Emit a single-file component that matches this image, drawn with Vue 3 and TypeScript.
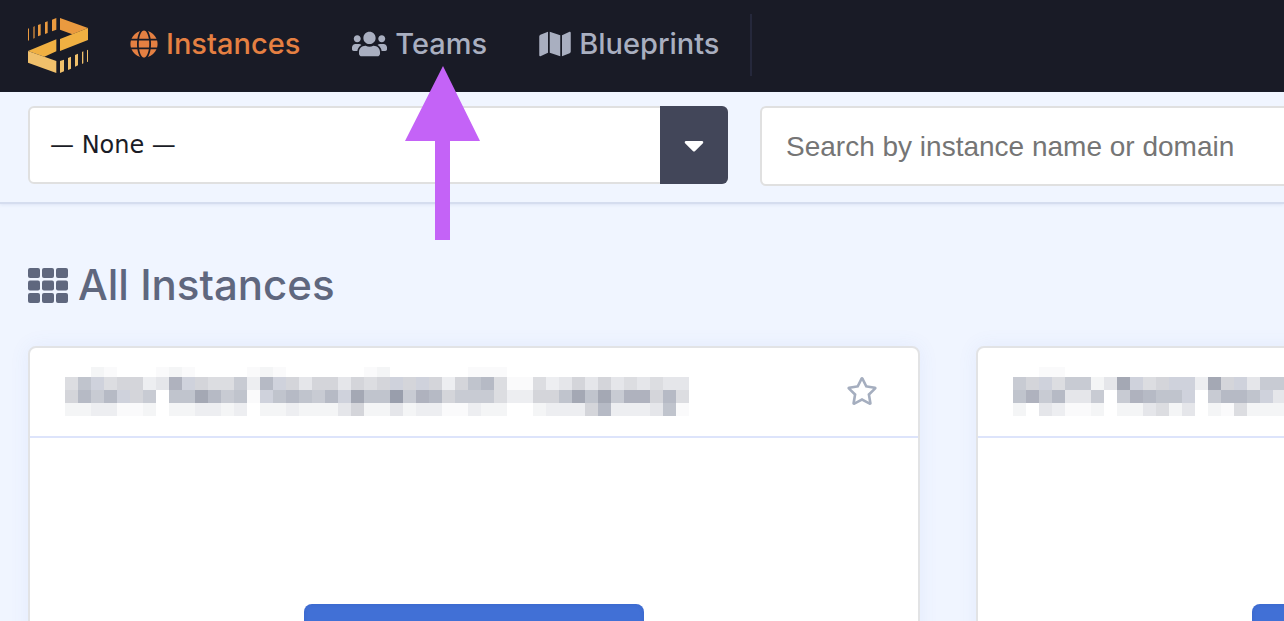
<script setup lang="ts">
import { ref } from 'vue'

interface NavItem {
  label: string
  viewBox: string
  width: number
  path: string
  active: boolean
}

interface Cell {
  x: number
  y: number
  height: number
  fill: string
}

interface Card {
  width: number
  cells: Cell[]
}

const navItems: NavItem[] = [
  {
    label: 'Instances',
    viewBox: '0 0 496 512',
    width: 28,
    active: true,
    path: 'M336.5 160C322 70.7 287.8 8 248 8s-74 62.7-88.5 152h177zM152 256c0 22.2 1.2 43.5 3.3 64h185.3c2.1-20.5 3.3-41.8 3.3-64s-1.2-43.5-3.3-64H155.3c-2.1 20.5-3.3 41.8-3.3 64zm324.7-96c-28.6-67.9-86.5-120.4-158-141.6 24.4 33.8 41.2 84.7 50 141.6h108zM177.2 18.4C105.8 39.6 47.8 92.1 19.3 160h108c8.7-56.9 25.5-107.8 49.9-141.6zM487.4 192H372.7c2.1 21 3.3 42.5 3.3 64s-1.2 43-3.3 64h114.6c5.5-20.5 8.6-41.8 8.6-64s-3.1-43.5-8.5-64zM120 256c0-21.5 1.2-43 3.3-64H8.6C3.2 212.5 0 233.8 0 256s3.2 43.5 8.6 64h114.6c-2-21-3.2-42.5-3.2-64zm39.5 96c14.5 89.3 48.7 152 88.5 152s74-62.7 88.5-152h-177zm159.3 141.6c71.4-21.2 129.4-73.7 158-141.6h-108c-8.8 56.9-25.6 107.8-50 141.6zM19.3 352c28.6 67.9 86.5 120.4 158 141.6-24.4-33.8-41.2-84.7-50-141.6h-108z',
  },
  {
    label: 'Teams',
    viewBox: '0 0 640 512',
    width: 35,
    active: false,
    path: 'M96 224c35.3 0 64-28.7 64-64s-28.7-64-64-64-64 28.7-64 64 28.7 64 64 64zm448 0c35.3 0 64-28.7 64-64s-28.7-64-64-64-64 28.7-64 64 28.7 64 64 64zm32 32h-64c-17.6 0-33.5 7.1-45.1 18.6 40.3 22.1 68.9 62 75.1 109.4h66c17.7 0 32-14.3 32-32v-32c0-35.3-28.7-64-64-64zm-256 0c61.9 0 112-50.1 112-112S381.9 32 320 32 208 82.1 208 144s50.1 112 112 112zm76.8 32h-8.3c-20.8 10-43.9 16-68.5 16s-47.6-6-68.5-16h-8.3C179.6 288 128 339.6 128 403.2V432c0 26.5 21.5 48 48 48h288c26.5 0 48-21.5 48-48v-28.8c0-63.6-51.6-115.2-115.2-115.2zm-223.7-13.4C161.5 263.1 145.6 256 128 256H64c-35.3 0-64 28.7-64 64v32c0 17.7 14.3 32 32 32h65.9c6.3-47.4 34.9-87.3 75.2-109.4z',
  },
  {
    label: 'Blueprints',
    viewBox: '0 0 576 512',
    width: 32,
    active: false,
    path: 'M0 117.66v346.32c0 11.32 11.43 19.06 21.94 14.86L160 416V32L20.12 87.95A32.006 32.006 0 0 0 0 117.66zM192 416l192 64V96L192 32v384zM554.06 33.16L416 96v384l139.88-55.95A31.996 31.996 0 0 0 576 394.34V48.02c0-11.32-11.43-19.06-21.94-14.86z',
  },
]

const shades: Record<string, string> = {
  a: '#fafafb',
  b: '#f4f5f6',
  c: '#edeef1',
  d: '#e5e6ea',
  e: '#dcdde1',
  f: '#d4d5da',
  g: '#cfd2dc',
  h: '#c8cbd3',
  i: '#c0c4cd',
  j: '#b6bac5',
  k: '#afb2be',
  l: '#a4a8b4',
  m: '#999eac',
}

// Each letter is one 13px block of a redacted instance name.
const cellSize = 13

function redact(rows: string[]): Card {
  const cells: Cell[] = []
  rows.forEach((row, r) => {
    Array.from(row).forEach((key, c) => {
      if (key === '.') return
      const y = r === 0 ? 0 : 10 + (r - 1) * cellSize
      cells.push({ x: c * cellSize, y, height: r === 0 ? 10 : cellSize, fill: shades[key] })
    })
  })
  return { width: Math.max(...rows.map((row) => row.length)) * cellSize, cells }
}

const cards: Card[] = [
  redact([
    '..ba...aba....aba......ab......aaa..............',
    'eigeffcdkgfeehcjgfdffdfefgfgfcfijeaaecdfdfdededd',
    'fjhjgfh.iiljhiagijihjgliimhkjfhhheccffililhkkfje',
    'bbccaab.bbccbc.bbcbbbdfbbdbccaacbb..bcccfjcccdia',
  ]),
  redact([
    '..aa.................',
    'hfgehhbdlgefggclfgdhh',
    'ikhjddh.hkjiig.hjjigd',
    'b.dcaab.bbdebd.baebbb',
  ]),
]

const team = ref('none')
const query = ref('')
</script>

<template>
  <div class="page">
    <header class="topbar">
      <a class="logo" href="#" aria-label="Home">
        <svg width="60" height="55" viewBox="24 22 180 165" aria-hidden="true">
          <g fill="#ea9a3f">
            <path d="M120 22 204 52 157 71 120 57z" />
            <path d="M96 27 109 22V57L96 62zM75 35 83 32V67L75 70zM54 43 62 40V74L54 77zM24 54 27 53V89L24 90z" />
            <path opacity=".6" d="M39 49 45 46V82L39 84z" />
          </g>
          <path fill="#f0b042" d="M204 52V88L120 121V85zM24 121 109 86V122L73 138z" />
          <g fill="#f0c06b">
            <path d="M24 121 73 138 109 151V187L24 156z" />
            <path d="M120 151 132 147V182L120 187zM144 142 153 138V174L144 178zM165 133 174 129V164L165 168zM186 124 190 122V158L186 160zM201 119 204 117V153L201 154z" />
          </g>
        </svg>
      </a>
      <nav class="nav">
        <a
          v-for="item in navItems"
          :key="item.label"
          class="nav-link"
          :class="{ active: item.active }"
          href="#"
        >
          <svg :width="item.width" height="28" :viewBox="item.viewBox" aria-hidden="true">
            <path fill="currentColor" :d="item.path" />
          </svg>
          <span>{{ item.label }}</span>
        </a>
      </nav>
      <div class="divider"></div>
    </header>

    <div class="toolbar">
      <div class="picker">
        <select v-model="team" class="picker-select" aria-label="Team">
          <option value="none">— None —</option>
        </select>
        <span class="picker-caret">
          <svg width="20" height="32" viewBox="0 0 320 512" aria-hidden="true">
            <path
              fill="#fff"
              d="M31.3 192h257.3c17.8 0 26.7 21.5 14.1 34.1L174.1 354.7c-7.8 7.8-20.5 7.8-28.3 0L17.2 226.1C4.6 213.5 13.5 192 31.3 192z"
            />
          </svg>
        </span>
      </div>
      <input
        v-model="query"
        class="search"
        type="search"
        aria-label="Search"
        placeholder="Search by instance name or domain"
      />
    </div>

    <main class="content">
      <h1 class="title">
        <svg width="40" height="35" viewBox="0 0 40 35" aria-hidden="true">
          <template v-for="r in 3" :key="r">
            <rect
              v-for="c in 3"
              :key="c"
              :x="(c - 1) * 14"
              :y="(r - 1) * 12.5"
              width="12"
              height="10"
              rx="2"
              fill="currentColor"
            />
          </template>
        </svg>
        <span>All Instances</span>
      </h1>

      <div class="cards">
        <article v-for="(card, i) in cards" :key="i" class="card">
          <div class="card-head">
            <svg class="redacted" :width="card.width" height="49" shape-rendering="crispEdges" aria-hidden="true">
              <rect
                v-for="(cell, n) in card.cells"
                :key="n"
                :x="cell.x"
                :y="cell.y"
                width="13"
                :height="cell.height"
                :fill="cell.fill"
              />
            </svg>
            <button class="star" type="button" aria-label="Add to favourites">
              <svg width="32" height="28" viewBox="0 0 576 512" aria-hidden="true">
                <path
                  fill="currentColor"
                  d="M528.1 171.5L382 150.2 316.7 17.8c-11.7-23.6-45.6-23.9-57.4 0L194 150.2 47.9 171.5c-26.2 3.8-36.7 36.1-17.7 54.6l105.7 103-25 145.5c-4.5 26.3 23.2 46 46.4 33.7L288 439.6l130.7 68.7c23.2 12.2 50.9-7.4 46.4-33.7l-25-145.5 105.7-103c19-18.5 8.5-50.8-17.7-54.6zM388.6 312.3l23.7 138.4L288 385.4l-124.3 65.3 23.7-138.4-100.6-98 139-20.2 62.2-126 62.2 126 139 20.2-100.6 98z"
                />
              </svg>
            </button>
          </div>
          <div class="card-body">
            <button class="open" type="button" aria-label="Open instance"></button>
          </div>
        </article>
      </div>
    </main>

    <svg class="arrow" width="76" height="174" viewBox="0 0 76 174" aria-hidden="true">
      <path fill="#c463f7" d="M38 0 75 75H45V174H30V75H0z" />
    </svg>
  </div>
</template>

<style>
body {
  background: #f0f5ff;
}
</style>

<style scoped>
.page {
  position: relative;
  height: 100vh;
  overflow: hidden;
  background: #f0f5ff;
  font-family: Inter, "Liberation Sans", sans-serif;
}

.topbar {
  display: flex;
  align-items: center;
  height: 92px;
  padding: 0 28px 2px;
  box-sizing: border-box;
  background: #191b26;
}

.logo {
  display: flex;
  margin-right: 42px;
}

.nav {
  display: flex;
  gap: 52px;
}

.nav-link {
  display: flex;
  align-items: center;
  gap: 8px;
  padding-bottom: 2px;
  color: #a9afc0;
  font-size: 29px;
  font-weight: 500;
  line-height: 36px;
  text-decoration: none;
}

.nav-link.active {
  color: #e58042;
}

.divider {
  width: 2px;
  height: 62px;
  margin-left: 31px;
  background: #25283b;
}

.toolbar {
  display: flex;
  align-items: flex-start;
  gap: 32px;
  padding: 14px 0 16px 28px;
  border-bottom: 2px solid #d5ddef;
  box-shadow: 0 1px 3px rgba(90, 115, 180, 0.12);
}

.picker {
  display: grid;
  grid-template-columns: 1fr 68px;
  flex: 0 0 700px;
  height: 78px;
}

.picker-select {
  grid-area: 1 / 1 / 2 / 3;
  width: 100%;
  padding: 0 90px 0 20px;
  border: 2px solid #e0e0e0;
  border-radius: 6px;
  appearance: none;
  background: #fff;
  color: #1a1c26;
  font-family: "DejaVu Sans", sans-serif;
  font-size: 24px;
}

.picker-caret {
  grid-area: 1 / 2 / 2 / 3;
  z-index: 1;
  display: flex;
  align-items: center;
  justify-content: center;
  border-radius: 0 6px 6px 0;
  background: #424659;
  pointer-events: none;
}

.search {
  flex: 0 0 700px;
  height: 80px;
  padding: 2px 24px 0;
  box-sizing: border-box;
  border: 2px solid #e0e0e0;
  border-radius: 6px;
  background: #fff;
  color: #1a1c26;
  font-family: "Liberation Sans", Arial, sans-serif;
  font-size: 28px;
}

.search::placeholder {
  color: #757575;
}

.content {
  padding: 56px 28px;
}

.title {
  display: flex;
  align-items: center;
  gap: 10px;
  margin: 0 0 36px;
  color: #5f677e;
  font-size: 42px;
  font-weight: 500;
  line-height: 50px;
}

.cards {
  display: grid;
  grid-template-columns: repeat(2, minmax(892px, 1fr));
  gap: 56px;
}

.card {
  border: 2px solid #e2e3e5;
  border-radius: 8px;
  background: #fff;
  box-shadow: 0 0 20px rgba(80, 110, 230, 0.08);
}

.card-head {
  display: flex;
  align-items: center;
  justify-content: space-between;
  height: 86px;
  padding: 0 40px 2px 35px;
  border-bottom: 2px solid #dde4fb;
}

.redacted {
  display: block;
}

.star {
  display: flex;
  padding: 0;
  border: 0;
  background: none;
  color: #a5aebf;
}

.card-body {
  display: flex;
  justify-content: center;
  padding: 166px 0 140px;
}

.open {
  width: 340px;
  height: 76px;
  border: 0;
  border-radius: 8px;
  background: #4170d6;
  box-shadow: inset 0 0 4px rgba(30, 60, 150, 0.2);
}

.arrow {
  position: absolute;
  top: 66px;
  left: 405px;
  pointer-events: none;
}
</style>
